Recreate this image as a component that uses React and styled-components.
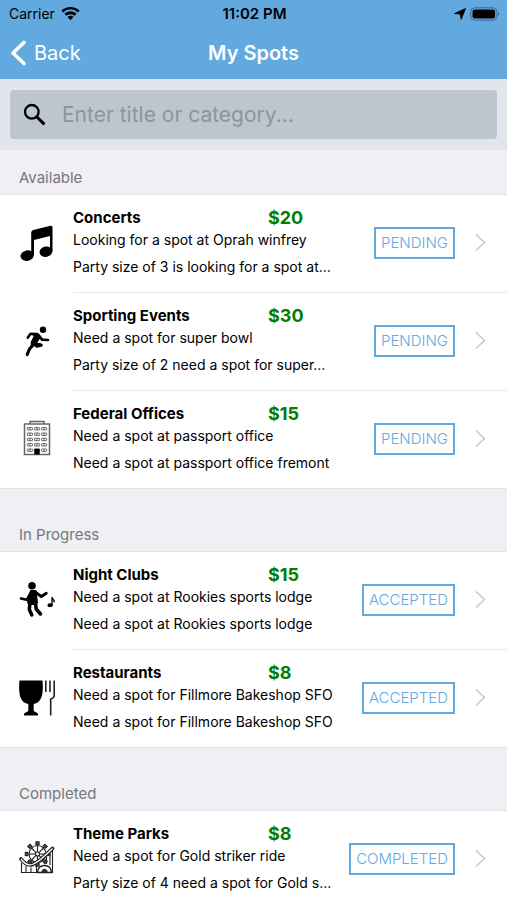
import React from "react";
import styled, { createGlobalStyle } from "styled-components";

const GlobalStyle = createGlobalStyle`
  * {
    box-sizing: border-box;
  }

  body {
    margin: 0;
    background: #efeff4;
    color: #000;
    font-family: Inter, "Liberation Sans", sans-serif;
  }
`;

const Screen = styled.div`
  display: flex;
  flex-direction: column;
  height: 100vh;
`;

const TopBar = styled.header`
  background: #62a9e0;
`;

const StatusBar = styled.div`
  display: grid;
  grid-template-columns: 1fr auto 1fr;
  align-items: center;
  height: 26px;
  padding: 1px 7px 0 9px;
  font-size: 14px;
`;

const Carrier = styled.span`
  display: flex;
  align-items: center;
  gap: 6px;
`;

const Clock = styled.time`
  font-size: 15px;
  font-weight: 600;
`;

const StatusIcons = styled.span`
  display: flex;
  align-items: center;
  justify-content: flex-end;
  gap: 4px;
`;

const NavBar = styled.nav`
  display: grid;
  grid-template-columns: 1fr auto 1fr;
  align-items: center;
  height: 53px;
  padding: 0 10px;
  color: #fff;
`;

const BackButton = styled.button`
  display: flex;
  align-items: center;
  gap: 8px;
  justify-self: start;
  padding: 0;
  border: 0;
  background: none;
  color: inherit;
  font: inherit;
  font-size: 20px;
  cursor: pointer;
`;

const Title = styled.h1`
  margin: 0;
  font-size: 20px;
  font-weight: 600;
`;

const SearchBar = styled.form`
  padding: 11px 10px;
  background: #e1e6ed;
`;

const SearchField = styled.label`
  display: flex;
  align-items: center;
  gap: 16px;
  height: 49px;
  padding: 0 12px;
  border-radius: 4px;
  background: #bdc6ce;
`;

const SearchInput = styled.input`
  flex: 1;
  min-width: 0;
  padding: 0;
  border: 0;
  outline: 0;
  background: none;
  font: inherit;
  font-size: 21px;

  &::placeholder {
    color: #8c959d;
    opacity: 1;
  }
`;

const SpotList = styled.main`
  flex: 1;
  min-height: 0;
  overflow-y: auto;
  scrollbar-width: none;
`;

const Section = styled.section`
  & + & {
    padding-top: 18px;
  }
`;

const SectionTitle = styled.h2`
  height: 44px;
  margin: 0;
  padding: 17px 19px 0;
  color: #77777c;
  font-size: 15px;
  font-weight: 400;
  line-height: 22px;
`;

const Rows = styled.ul`
  margin: 0;
  padding: 0;
  border-top: 1px solid #e2e2e6;
  border-bottom: 1px solid #e2e2e6;
  background: #fff;
  list-style: none;
`;

const Row = styled.a`
  display: flex;
  color: inherit;
  text-decoration: none;
`;

const IconCell = styled.span`
  display: flex;
  flex: none;
  align-items: center;
  justify-content: center;
  width: 73px;
  padding-bottom: 2px;
`;

const RowBody = styled.span`
  display: flex;
  flex: 1;
  align-items: center;
  min-width: 0;
  height: 98px;
  padding: 0 21px 2px 0;
  border-bottom: 1px solid #e8e8ea;

  li:last-child & {
    height: 97px;
    border-bottom: 0;
  }
`;

const Details = styled.span`
  flex: 1;
  min-width: 0;
  font-size: 14px;
  line-height: 22px;
  white-space: nowrap;
`;

const Heading = styled.span`
  display: flex;
`;

const Name = styled.strong`
  flex: 0 0 195px;
  font-size: 15px;
  font-weight: 700;
`;

const Price = styled.strong`
  color: #008000;
  font-size: 18px;
  font-weight: 700;
`;

const Line = styled.span`
  display: block;

  & + & {
    margin-top: 5px;
  }
`;

const Badge = styled.span`
  flex: none;
  margin-right: 20px;
  padding: 0 5px;
  border: 2px solid #62a9e0;
  color: #62a9e0;
  font-size: 15px;
  font-weight: 300;
  line-height: 28px;
`;

const WifiIcon = () => (
  <svg width="19" height="14" viewBox="0 0 19 14" aria-hidden="true">
    <path d="M9.5 0C13 0 16.200 1.300 18.600 3.600L16.900 5.400A10.500 10.500 0 0 0 2.100 5.400L.4 3.600C2.800 1.300 6 0 9.500 0Z" />
    <path d="M9.500 4.300c2.300 0 4.500.9 6.100 2.500l-1.900 2a6.200 6.200 0 0 0-8.400 0L3.400 6.800c1.600-1.600 3.800-2.500 6.100-2.500Z" />
    <path d="M9.500 8.700c1.200 0 2.200.5 3 1.200L9.500 13.300 6.500 9.900c.8-.7 1.800-1.200 3-1.200Z" />
  </svg>
);

const LocationIcon = () => (
  <svg width="12" height="12" viewBox="0 0 12 12" aria-hidden="true">
    <path d="M11.500.6 7.200 11.300 6.200 6.100.6 5.500Z" stroke="#000" strokeWidth=".9" strokeLinejoin="round" />
  </svg>
);

const BatteryIcon = () => (
  <svg width="30" height="14" viewBox="0 0 30 14" aria-hidden="true">
    <rect x=".8" y=".8" width="26" height="12.400" rx="3.800" fill="none" stroke="#3d6a8d" strokeWidth="1" />
    <rect x="2.500" y="2.500" width="22.600" height="9" rx="2.200" />
    <path d="M28 5c1.700.6 1.700 3.400 0 4Z" fill="#3d6a8d" />
  </svg>
);

const BackIcon = () => (
  <svg width="16" height="26" viewBox="0 0 16 26" aria-hidden="true">
    <path d="M14 2.500 3 13l11 10.500" fill="none" stroke="#fff" strokeWidth="3.600" strokeLinecap="round" strokeLinejoin="round" />
  </svg>
);

const SearchIcon = () => (
  <svg width="24" height="24" viewBox="0 0 24 24" aria-hidden="true">
    <circle cx="9.800" cy="8.800" r="6.800" fill="none" stroke="#000" strokeWidth="2.300" />
    <path d="m14.700 13.700 7.700 7.700" stroke="#000" strokeWidth="3" />
  </svg>
);

const ChevronIcon = () => (
  <svg width="11" height="19" viewBox="0 0 11 19" aria-hidden="true">
    <path d="m1 1.500 8.500 8L1 17.500" fill="none" stroke="#c7c7cc" strokeWidth="1.500" />
  </svg>
);

// The category icons share one 40x40 grid.
const CategoryIcon = ({ children }) => (
  <svg width="40" height="40" viewBox="0 0 40 40" aria-hidden="true">
    {children}
  </svg>
);

const MusicIcon = () => (
  <CategoryIcon>
    <path d="M14.200 9.500Q14.300 7.500 16.200 7L33.500 2.700Q35.500 2.300 35.500 4.300V28H33V13L17 17V32H14.200Z" />
    <ellipse cx="10.200" cy="32.600" rx="6.700" ry="5.200" transform="rotate(-12 10.200 32.600)" />
    <ellipse cx="29" cy="28.700" rx="6.500" ry="5.200" transform="rotate(-12 29 28.700)" />
  </CategoryIcon>
);

const RunnerIcon = () => (
  <CategoryIcon>
    <circle cx="26" cy="8.700" r="3.200" />
    <path d="M15 12.800 20.500 13 23 16 19.500 21.500 18.500 24.500 14.500 25 14.500 21 17.500 15Z" stroke="#000" strokeWidth="1.500" strokeLinejoin="round" />
    <g fill="none" stroke="#000" strokeLinecap="round" strokeLinejoin="round">
      <path d="m20 13-6.500-.2-2.800 3.900" strokeWidth="2.500" />
      <path d="m21.500 14 3.500 4.600 6 .4" strokeWidth="2.700" />
      <path d="m17 22.500 7.200 1.600-4.500 1" strokeWidth="3.200" />
      <path d="m16 24-3.500 4-2.300 5.500" strokeWidth="3.200" />
    </g>
  </CategoryIcon>
);

const windowRows = [8.6, 14, 19.3, 24.6, 30];
const windowColumns = [10.3, 17.4, 24.5];

const OfficeIcon = () => (
  <CategoryIcon>
    <g fill="#fff" stroke="#666" strokeWidth="1.500">
      <path d="M13 5V2.500H27V5" />
      <rect x="7.500" y="5" width="25" height="30.500" />
    </g>
    {windowRows.map((y) =>
      windowColumns.map((x) => (
        <g key={`${x}-${y}`} fill="none" stroke="#444" strokeWidth=".8">
          <rect x={x} y={y} width="5.200" height="2.400" rx=".6" />
          <path d={`M${x + 2.6} ${y}v2.400`} />
        </g>
      ))
    )}
    <rect x="17.300" y="29.800" width="5.400" height="5.700" />
  </CategoryIcon>
);

const DancerIcon = () => (
  <CategoryIcon>
    <circle cx="15" cy="5.800" r="3.800" />
    <path d="M13.500 10.500H19L20.500 23 18 24.500H11.500L10.500 22Z" stroke="#000" strokeLinejoin="round" />
    <g fill="none" stroke="#000" strokeLinecap="round" strokeLinejoin="round">
      <path d="m14 12.500-4.300 7.300-5.700-1.200" strokeWidth="2.600" />
      <path d="m18 11.800 6.300 4.700 5-3.200" strokeWidth="2.900" />
      <path d="m13 23-.7 6.500 2.500 5.500" strokeWidth="3.500" />
      <path d="m18.500 23 .7 6 4.300 5" strokeWidth="3.500" />
      <path d="M35 25.500V17.500c.5 2.300 2.500 2 2.200 4.300" strokeWidth="1.400" />
    </g>
    <ellipse cx="33" cy="25.300" rx="2.500" ry="2" />
  </CategoryIcon>
);

const GlassIcon = () => (
  <CategoryIcon>
    <path d="M2.500 2.500H25.500C26.500 13 26 24.500 16.700 26V33L21 35.500V37.500H7V35.500L11.300 33V26C2 24.500 1.500 13 2.500 2.500Z" />
    <g fill="none" stroke="#222" strokeWidth="1.600">
      <path d="M28.800 2.500V14M33 2.500V14" />
      <path d="M37.200 2.500V17.500Q37.200 20 33.700 21V37.500" />
    </g>
  </CategoryIcon>
);

const spokes = [0, 45, 90, 135, 180, 225, 270, 315];

const RollerCoasterIcon = () => (
  <CategoryIcon>
    <g fill="none" stroke="#222" strokeWidth="1.100">
      <circle cx="20.500" cy="15" r="8.500" />
      <circle cx="20.500" cy="15" r="2" />
      {spokes.map((angle) => (
        <g key={angle} transform={`rotate(${angle} 20.500 15)`}>
          <path d="M20.500 13V6.500" />
          <rect x="18.900" y="2.800" width="3.200" height="2.600" fill="#555" />
        </g>
      ))}
      <path d="M4 20Q9.500 27.500 15.500 25.500 22 23 35.500 9.500" stroke="#222" strokeWidth="3.800" strokeLinecap="round" />
      <path d="M4 20Q9.500 27.500 15.500 25.500 22 23 35.500 9.500" stroke="#fff" strokeWidth="1.300" />
      <path d="M4.500 24V33.500H35.500V12M9 27V33M14 28.500V33M19.500 26.500V33M29.500 17V25M33 14V26" />
      <path d="M20.500 33.500Q21 26.500 27.500 26.500T34.500 33.500Z" fill="#fff" strokeWidth="1.400" />
      <path d="M25 33.500V32Q27.500 28.500 30 32V33.500Z" fill="#333" />
    </g>
  </CategoryIcon>
);

const sections = [
  {
    title: "Available",
    spots: [
      {
        name: "Concerts",
        price: "$20",
        summary: "Looking for a spot at Oprah winfrey",
        description: "Party size of 3 is looking for a spot at...",
        status: "PENDING",
        Icon: MusicIcon,
      },
      {
        name: "Sporting Events",
        price: "$30",
        summary: "Need a spot for super bowl",
        description: "Party size of 2 need a spot for super...",
        status: "PENDING",
        Icon: RunnerIcon,
      },
      {
        name: "Federal Offices",
        price: "$15",
        summary: "Need a spot at passport office",
        description: "Need a spot at passport office fremont",
        status: "PENDING",
        Icon: OfficeIcon,
      },
    ],
  },
  {
    title: "In Progress",
    spots: [
      {
        name: "Night Clubs",
        price: "$15",
        summary: "Need a spot at Rookies sports lodge",
        description: "Need a spot at Rookies sports lodge",
        status: "ACCEPTED",
        Icon: DancerIcon,
      },
      {
        name: "Restaurants",
        price: "$8",
        summary: "Need a spot for Fillmore Bakeshop SFO",
        description: "Need a spot for Fillmore Bakeshop SFO",
        status: "ACCEPTED",
        Icon: GlassIcon,
      },
    ],
  },
  {
    title: "Completed",
    spots: [
      {
        name: "Theme Parks",
        price: "$8",
        summary: "Need a spot for Gold striker ride",
        description: "Party size of 4 need a spot for Gold s...",
        status: "COMPLETED",
        Icon: RollerCoasterIcon,
      },
    ],
  },
];

const SpotRow = ({ spot }) => (
  <li>
    <Row href="#">
      <IconCell>
        <spot.Icon />
      </IconCell>
      <RowBody>
        <Details>
          <Heading>
            <Name>{spot.name}</Name>
            <Price>{spot.price}</Price>
          </Heading>
          <Line>{spot.summary}</Line>
          <Line>{spot.description}</Line>
        </Details>
        <Badge>{spot.status}</Badge>
        <ChevronIcon />
      </RowBody>
    </Row>
  </li>
);

const App = () => {
  return (
    <Screen>
      <GlobalStyle />
      <TopBar>
        <StatusBar>
          <Carrier>
            Carrier
            <WifiIcon />
          </Carrier>
          <Clock>11:02 PM</Clock>
          <StatusIcons>
            <LocationIcon />
            <BatteryIcon />
          </StatusIcons>
        </StatusBar>
        <NavBar>
          <BackButton type="button">
            <BackIcon />
            Back
          </BackButton>
          <Title>My Spots</Title>
        </NavBar>
      </TopBar>
      <SearchBar role="search">
        <SearchField htmlFor="spot-search">
          <SearchIcon />
          <SearchInput id="spot-search" type="text" placeholder="Enter title or category..." />
        </SearchField>
      </SearchBar>
      <SpotList>
        {sections.map((section) => (
          <Section key={section.title}>
            <SectionTitle>{section.title}</SectionTitle>
            <Rows>
              {section.spots.map((spot) => (
                <SpotRow key={spot.name} spot={spot} />
              ))}
            </Rows>
          </Section>
        ))}
      </SpotList>
    </Screen>
  );
};

export default App;
